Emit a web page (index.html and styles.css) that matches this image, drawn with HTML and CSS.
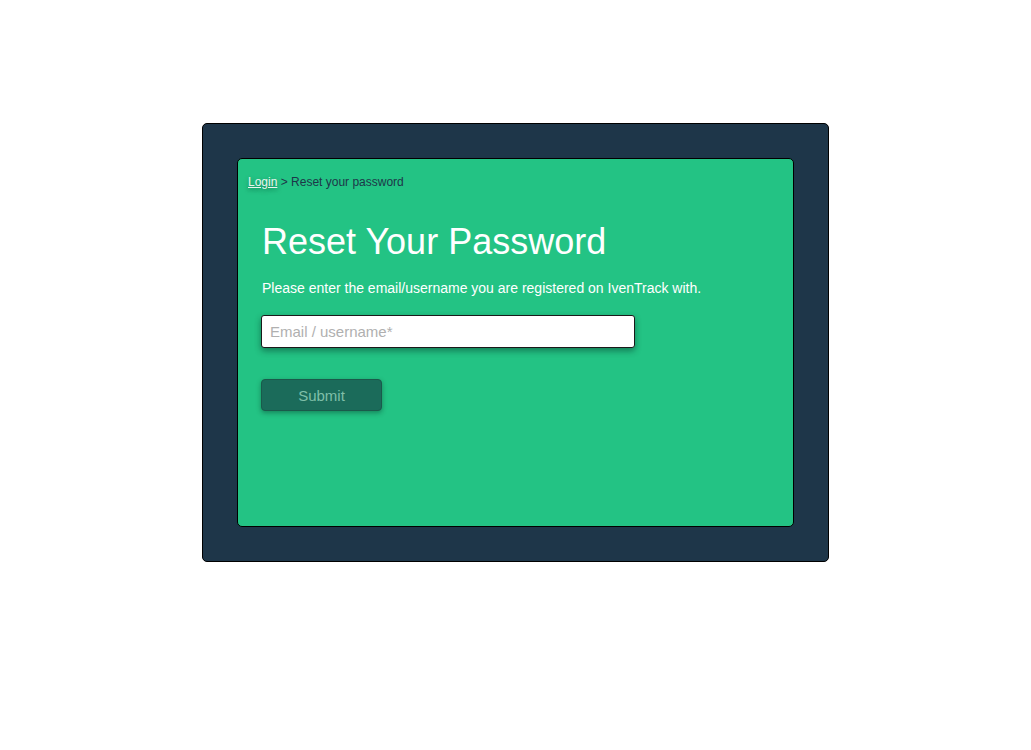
FILE: index.html
```html
<!DOCTYPE html>
<html>
<head>
<meta charset="utf-8">
<link rel="stylesheet" href="styles.css">
</head>
<body>
<div class="page">
  <div class="outer">
    <div class="inner">
      <div class="crumbs"><a class="crumb-link" href="#">Login</a> &gt; Reset your password</div>
      <div class="content">
        <h1 class="title">Reset Your Password</h1>
        <p class="lead">Please enter the email/username you are registered on IvenTrack with.</p>
        <input class="field" type="text" placeholder="Email / username*">
        <button class="submit" type="button">Submit</button>
      </div>
    </div>
  </div>
</div>
</body>
</html>
```
FILE: styles.css
```css
* { box-sizing: border-box; }
html, body { margin: 0; padding: 0; background: #fff; }
body { font-family: "Liberation Sans", Arial, sans-serif; }
.page {
  padding-top: 123px;
  padding-left: 202px;
}
.outer {
  width: 627px;
  height: 439px;
  background: #1e3649;
  border: 1px solid #000;
  border-radius: 5px;
  padding: 34px;
}
.inner {
  height: 369px;
  background: #23c384;
  border: 1px solid #000;
  border-radius: 5px;
  padding: 16px 10px;
}
.crumbs {
  font-size: 12px;
  color: #1e3649;
  line-height: 14px;
}
.crumb-link {
  color: #e8f4ee;
  text-decoration: underline;
  text-shadow: 0 2px 4px rgba(0,60,40,0.5);
}
.content {
  padding: 0 14px;
}
.title {
  margin: 32px 0 0;
  font-size: 36px;
  font-weight: normal;
  color: #fff;
  line-height: 42px;
}
.lead {
  margin: 16px 0 0;
  font-size: 14px;
  color: #fff;
  line-height: 18px;
}
.field {
  display: block;
  margin: 18px 0 0 -1px;
  width: 374px;
  height: 33px;
  border: 1px solid #1a1a1a;
  border-radius: 3px;
  padding: 0 8px;
  font-family: inherit;
  font-size: 15px;
  background: #fff;
  box-shadow: 0 3px 6px rgba(0,40,30,0.45);
  outline: none;
}
.field::placeholder { color: #b0b0b0; }
.submit {
  display: block;
  margin: 31px 0 0 -1px;
  width: 121px;
  height: 32px;
  background: #1b6b5a;
  color: #7fbfa8;
  border: 1px solid #1a5a4b;
  border-radius: 4px;
  font-family: inherit;
  font-size: 15px;
  box-shadow: 0 2px 5px rgba(0,40,30,0.4);
}
```
